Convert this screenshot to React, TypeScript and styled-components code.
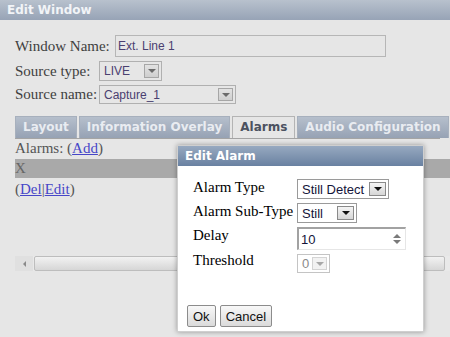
import styled, { createGlobalStyle, css } from 'styled-components';

const GlobalStyle = createGlobalStyle`
  html, body {
    margin: 0;
    padding: 0;
    background: #e6e6e6;
    overflow: hidden;
  }
  body {
    font-family: "Liberation Serif", "Times New Roman", serif;
  }
`;

const Page = styled.div`
  position: relative;
  width: 450px;
  height: 337px;
  overflow: hidden;
  background: #e6e6e6;
`;

const TitleBar = styled.div`
  height: 20px;
  padding-left: 7px;
  background: linear-gradient(#b8c1cd, #97a3b6);
  color: #f2f4f7;
  font: bold 12px/20px "DejaVu Sans", Verdana, sans-serif;
`;

const Form = styled.div`
  display: flex;
  flex-direction: column;
  gap: 4px;
  padding: 15px 0 0 15px;
  color: #404040;
  font-size: 15px;
`;

const Field = styled.div<{ $h: number }>`
  display: flex;
  align-items: center;
  height: ${(p) => p.$h}px;
`;

const Label = styled.span<{ $w: number }>`
  width: ${(p) => p.$w}px;
  white-space: nowrap;
`;

const controlText = css`
  font-family: "Liberation Sans", Arial, sans-serif;
  box-sizing: border-box;
  display: flex;
  align-items: center;
`;

const TextBox = styled.div<{ $w: number }>`
  ${controlText};
  width: ${(p) => p.$w}px;
  height: 100%;
  padding-left: 2px;
  border: 1px solid #b6b6b6;
  color: #4a4070;
  font-size: 12px;
`;

type Tone = 'faded' | 'normal' | 'disabled';

const SelectBox = styled.div<{ $w: number; $tone: Tone }>`
  ${controlText};
  justify-content: space-between;
  width: ${(p) => p.$w}px;
  height: 100%;
  padding: 2px 2px 2px 4px;
  border: 1px solid
    ${(p) => (p.$tone === 'faded' ? '#b0b0b0' : p.$tone === 'disabled' ? '#c4c4c4' : '#9a9a9a')};
  background: ${(p) => (p.$tone === 'faded' ? 'transparent' : '#fff')};
  color: ${(p) => (p.$tone === 'faded' ? '#4a4070' : p.$tone === 'disabled' ? '#8a8a8a' : '#14143a')};
  font-size: ${(p) => (p.$tone === 'faded' ? 12 : 13)}px;
`;

const ArrowButton = styled.div<{ $tone: Tone }>`
  width: ${(p) => (p.$tone === 'normal' ? 17 : 15)}px;
  align-self: stretch;
  display: flex;
  align-items: center;
  justify-content: center;
  box-sizing: border-box;
  border: 1px solid
    ${(p) => (p.$tone === 'faded' ? '#a6a6a6' : p.$tone === 'disabled' ? '#d4d4d4' : '#8a8a8a')};
  background: ${(p) =>
    p.$tone === 'disabled'
      ? '#f2f2f2'
      : p.$tone === 'faded'
        ? 'linear-gradient(#e2e2e2, #cfcfcf)'
        : 'linear-gradient(#f4f4f4, #d6d6d6)'};
  &::after {
    content: '';
    border-left: 4px solid transparent;
    border-right: 4px solid transparent;
    border-top: 4px solid
      ${(p) => (p.$tone === 'faded' ? '#6a6a6a' : p.$tone === 'disabled' ? '#a8a8a8' : '#111')};
  }
`;

function Select({ w, tone, value }: { w: number; tone: Tone; value: string }) {
  return (
    <SelectBox $w={w} $tone={tone}>
      <span>{value}</span>
      <ArrowButton $tone={tone} />
    </SelectBox>
  );
}

const Tabs = styled.div`
  display: flex;
  gap: 2px;
  width: 425px;
  margin: 12px 0 0 15px;
  border-bottom: 1px solid #a4a4a4;
`;

const Tab = styled.div<{ $active?: boolean }>`
  height: 22px;
  padding: 0 7px;
  box-sizing: border-box;
  border: 1px solid ${(p) => (p.$active ? '#b4b4b4' : '#a7b0bd')};
  border-bottom: none;
  margin-bottom: ${(p) => (p.$active ? '-1px' : '0')};
  background: ${(p) => (p.$active ? '#e6e6e6' : 'linear-gradient(#b6bfcc, #96a2b4)')};
  color: ${(p) => (p.$active ? '#4c5260' : '#e9ecf1')};
  font: bold 12px/21px "DejaVu Sans", Verdana, sans-serif;
  white-space: nowrap;
`;

const AlarmPanel = styled.div`
  height: 117px;
  padding-left: 15px;
  color: #555;
  font-size: 15px;
`;

const Line = styled.div<{ $top?: number }>`
  height: 19px;
  line-height: 19px;
  margin-top: ${(p) => p.$top ?? 0}px;
  white-space: nowrap;
`;

const Link = styled.a`
  color: #4646c8;
  text-decoration: underline;
`;

const AlarmRow = styled.div`
  height: 19px;
  margin-top: 1px;
  line-height: 19px;
  background: #a9a9a9;
  color: #666;
`;

const Scrollbar = styled.div`
  display: flex;
  height: 15px;
  margin-left: 15px;
  background: #e9e9e9;
`;

const ScrollArrow = styled.div`
  width: 18px;
  display: flex;
  align-items: center;
  justify-content: center;
  background: #e0e0e0;
  &::after {
    content: '';
    border-top: 3px solid transparent;
    border-bottom: 3px solid transparent;
    border-right: 3px solid #8a8a8a;
  }
`;

const Thumb = styled.div`
  width: 411px;
  margin-left: 1px;
  box-sizing: border-box;
  border: 1px solid #bdbdbd;
  border-radius: 2px;
  background: linear-gradient(#f2f2f2, #d6d6d6);
`;

const Dialog = styled.div`
  position: absolute;
  left: 177px;
  top: 145px;
  width: 247px;
  height: 187px;
  box-sizing: border-box;
  border: 1px solid #cfcfcf;
  background: #fff;
  box-shadow: 0 0 5px rgba(0, 0, 0, 0.35);
  display: flex;
  flex-direction: column;
`;

const DialogHeader = styled.div`
  height: 20px;
  padding-left: 7px;
  background: linear-gradient(#97a9c0, #6981a1);
  color: #fff;
  font: bold 12px/20px "DejaVu Sans", Verdana, sans-serif;
`;

const DialogBody = styled.div`
  flex: 1;
  display: flex;
  flex-direction: column;
  justify-content: space-between;
  padding: 13px 0 4px 15px;
`;

const Grid = styled.div`
  display: grid;
  grid-template-columns: 104px auto;
  row-gap: 4px;
  align-items: start;
  color: #000;
  font-size: 15px;
`;

const Cell = styled.div<{ $h: number }>`
  height: ${(p) => p.$h}px;
  display: flex;
`;

const GridLabel = styled.div<{ $shift?: number }>`
  white-space: nowrap;
  line-height: 17px;
  margin-top: ${(p) => p.$shift ?? 0}px;
`;

const NumberBox = styled.div`
  ${controlText};
  justify-content: space-between;
  width: 109px;
  height: 100%;
  padding: 0 4px 0 2px;
  border-top: 2px solid #a2a2a2;
  border-left: 2px solid #a2a2a2;
  border-right: 1px solid #e6e6e6;
  border-bottom: 1px solid #e6e6e6;
  color: #14143a;
  font-size: 13px;
`;

const Spinner = styled.div`
  display: flex;
  flex-direction: column;
  gap: 2px;
  &::before,
  &::after {
    content: '';
    border-left: 4px solid transparent;
    border-right: 4px solid transparent;
  }
  &::before {
    border-bottom: 4px solid #7a7a7a;
  }
  &::after {
    border-top: 4px solid #7a7a7a;
  }
`;

const Buttons = styled.div`
  display: flex;
  gap: 4px;
  margin-left: -6px;
`;

const Button = styled.button`
  height: 22px;
  padding: 0 5px;
  border: 1px solid #8c8c8c;
  border-radius: 2px;
  background: linear-gradient(#f8f8f8, #dadada);
  color: #111;
  font: 13px "Liberation Sans", Arial, sans-serif;
`;

export default function App() {
  return (
    <Page>
      <GlobalStyle />
      <TitleBar>Edit Window</TitleBar>
      <Form>
        <Field $h={22}>
          <Label $w={100}>Window Name:</Label>
          <TextBox $w={271}>Ext. Line 1</TextBox>
        </Field>
        <Field $h={20}>
          <Label $w={84}>Source type:</Label>
          <Select w={63} tone='faded' value='LIVE' />
        </Field>
        <Field $h={19}>
          <Label $w={84}>Source name:</Label>
          <Select w={137} tone='faded' value='Capture_1' />
        </Field>
      </Form>
      <Tabs>
        <Tab>Layout</Tab>
        <Tab>Information Overlay</Tab>
        <Tab $active>Alarms</Tab>
        <Tab>Audio Configuration</Tab>
      </Tabs>
      <AlarmPanel>
        <Line>
          Alarms: (<Link>Add</Link>)
        </Line>
        <AlarmRow>X</AlarmRow>
        <Line $top={2}>
          (<Link>Del</Link>|<Link>Edit</Link>)
        </Line>
      </AlarmPanel>
      <Scrollbar>
        <ScrollArrow />
        <Thumb />
      </Scrollbar>

      <Dialog>
        <DialogHeader>Edit Alarm</DialogHeader>
        <DialogBody>
          <Grid>
            <GridLabel>Alarm Type</GridLabel>
            <Cell $h={20}>
              <Select w={92} tone='normal' value='Still Detect' />
            </Cell>
            <GridLabel>Alarm Sub-Type</GridLabel>
            <Cell $h={20}>
              <Select w={60} tone='normal' value='Still' />
            </Cell>
            <GridLabel>Delay</GridLabel>
            <Cell $h={23}>
              <NumberBox>
                <span>10</span>
                <Spinner />
              </NumberBox>
            </Cell>
            <GridLabel $shift={-2}>Threshold</GridLabel>
            <Cell $h={19}>
              <Select w={33} tone='disabled' value='0' />
            </Cell>
          </Grid>
          <Buttons>
            <Button>Ok</Button>
            <Button>Cancel</Button>
          </Buttons>
        </DialogBody>
      </Dialog>
    </Page>
  );
}
